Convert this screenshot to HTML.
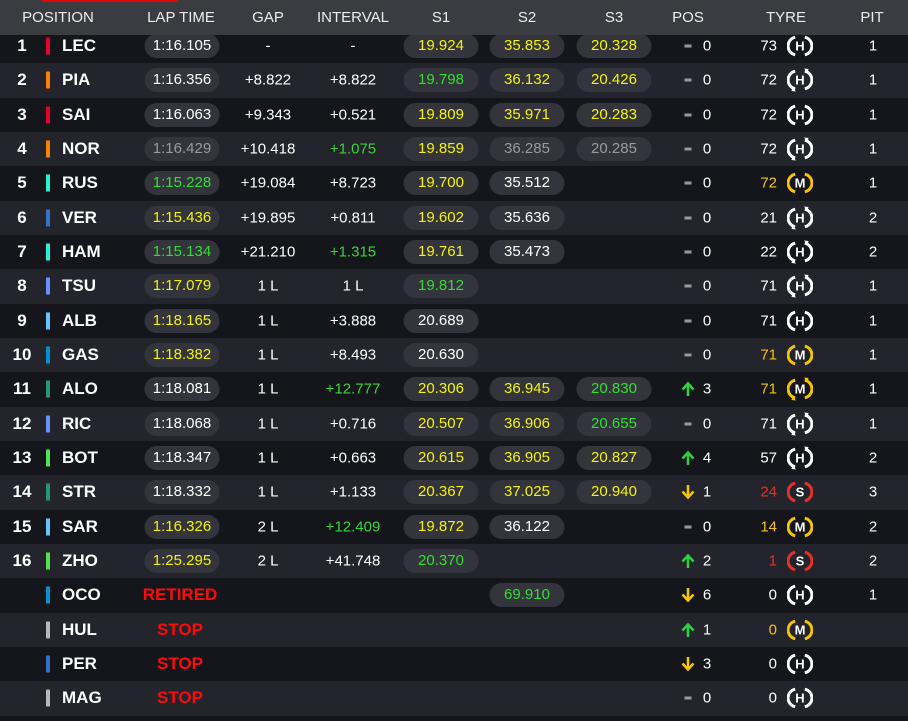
<!DOCTYPE html><html><head><meta charset="utf-8"><style>
*{margin:0;padding:0;box-sizing:border-box}
body{width:908px;height:721px;background:#15161c;font-family:"Liberation Sans",sans-serif;color:#fff;position:relative;overflow:hidden}
.hd{position:absolute;left:0;top:0;width:908px;height:35px;background:#3b3c41;z-index:2;font-size:15px;color:#ececec}
.hd span{position:absolute;top:9px;transform:translateX(-50%);white-space:nowrap}
.rb{position:absolute;left:41px;top:0;width:137px;height:2px;background:#e10600;z-index:3}
.r{position:absolute;left:0;width:908px;height:34.33px;font-size:15px}
.r.o{background:#23242c}
.r span{position:absolute;top:50%;transform:translate(-50%,-50%);white-space:nowrap}
.n{left:22px;font-weight:bold;font-size:17px}
.b{left:48px;width:4px;height:17px}
.c{left:62px;font-weight:bold;font-size:17px;transform:translate(0,-50%)!important}
.p{height:24px;width:75px;border-radius:12px;background:#34353c;text-align:center;line-height:24px}
.lt{left:182px}.s1{left:441px}.s2{left:527px}.s3{left:614px}
.g{left:268px}.iv{left:353px}
.ar{left:688px;font-weight:bold;width:14px;height:16px}.pn{left:707px}
.tn{left:777px;transform:translate(-100%,-50%)!important}
.ti{left:800px;width:26px;height:26px}
.pt{left:873px}
.Y{color:#f2f20a}.G{color:#33dd33}.W{color:#fff}.D{color:#9a9a9e}.IG{color:#39d439}
.TY{color:#f5c400}.TR{color:#e8302a}
.ret{left:180px;color:#ff0a0a;font-weight:bold;font-size:17px}
.stop{left:180px;color:#ff0a0a;font-weight:bold;font-size:17px}
.dash{left:688px;width:7px;height:3px;background:#9a9a9e}
</style></head><body>
<div class="hd"><span style="left:58px">POSITION</span><span style="left:181px">LAP TIME</span><span style="left:268px">GAP</span><span style="left:353px">INTERVAL</span><span style="left:441px">S1</span><span style="left:527px">S2</span><span style="left:614px">S3</span><span style="left:688px">POS</span><span style="left:786px">TYRE</span><span style="left:872px">PIT</span></div>
<div class="rb"></div>
<svg width="0" height="0" style="position:absolute"><defs>
<g id="arcs"><path d="M8.2 4.2A9 9 0 0 0 8.2 21.8M17.8 4.2A9 9 0 0 1 17.8 21.8" fill="none" stroke-width="3"/></g>
<g id="rot"><path d="M17 1.5l4.5 0.5-1 4.2zM9 24.5l-4.5-0.5 1-4.2z"/></g>
<g id="up"><path d="M7 15V3M1.5 8.5L7 2.5l5.5 6" fill="none" stroke-width="2.6"/></g>
<g id="dn"><path d="M7 1v12M1.5 7.5L7 13.5l5.5-6" fill="none" stroke-width="2.6"/></g>
</defs></svg>
<div style="position:absolute;left:0;top:29px">
<div class="r" style="top:0"><span class="n">1</span><span class="b" style="background:#e8002d"></span><span class="c">LEC</span><span class="p lt W">1:16.105</span><span class="g">-</span><span class="iv">-</span><span class="p s1 Y">19.924</span><span class="p s2 Y">35.853</span><span class="p s3 Y">20.328</span><span class="dash"></span><span class="pn">0</span><span class="tn">73</span><span class="ti"><svg width="26" height="26" stroke="#fff" fill="#fff"><use href="#arcs"/><text x="13" y="17.5" text-anchor="middle" font-size="13" font-weight="bold" stroke="none" font-family="Liberation Sans">H</text></svg></span><span class="pt">1</span></div>
<div class="r o" style="top:34.33px"><span class="n">2</span><span class="b" style="background:#ff8000"></span><span class="c">PIA</span><span class="p lt W">1:16.356</span><span class="g">+8.822</span><span class="iv">+8.822</span><span class="p s1 G">19.798</span><span class="p s2 Y">36.132</span><span class="p s3 Y">20.426</span><span class="dash"></span><span class="pn">0</span><span class="tn">72</span><span class="ti"><svg width="26" height="26" stroke="#fff" fill="#fff"><use href="#arcs"/><use href="#rot" stroke="none"/><text x="13" y="17.5" text-anchor="middle" font-size="13" font-weight="bold" stroke="none" font-family="Liberation Sans">H</text></svg></span><span class="pt">1</span></div>
<div class="r" style="top:68.66px"><span class="n">3</span><span class="b" style="background:#e8002d"></span><span class="c">SAI</span><span class="p lt W">1:16.063</span><span class="g">+9.343</span><span class="iv">+0.521</span><span class="p s1 Y">19.809</span><span class="p s2 Y">35.971</span><span class="p s3 Y">20.283</span><span class="dash"></span><span class="pn">0</span><span class="tn">72</span><span class="ti"><svg width="26" height="26" stroke="#fff" fill="#fff"><use href="#arcs"/><text x="13" y="17.5" text-anchor="middle" font-size="13" font-weight="bold" stroke="none" font-family="Liberation Sans">H</text></svg></span><span class="pt">1</span></div>
<div class="r o" style="top:103px"><span class="n">4</span><span class="b" style="background:#ff8000"></span><span class="c">NOR</span><span class="p lt D">1:16.429</span><span class="g">+10.418</span><span class="iv IG">+1.075</span><span class="p s1 Y">19.859</span><span class="p s2 D">36.285</span><span class="p s3 D">20.285</span><span class="dash"></span><span class="pn">0</span><span class="tn">72</span><span class="ti"><svg width="26" height="26" stroke="#fff" fill="#fff"><use href="#arcs"/><use href="#rot" stroke="none"/><text x="13" y="17.5" text-anchor="middle" font-size="13" font-weight="bold" stroke="none" font-family="Liberation Sans">H</text></svg></span><span class="pt">1</span></div>
<div class="r" style="top:137.3px"><span class="n">5</span><span class="b" style="background:#27f4d2"></span><span class="c">RUS</span><span class="p lt G">1:15.228</span><span class="g">+19.084</span><span class="iv">+8.723</span><span class="p s1 Y">19.700</span><span class="p s2 W">35.512</span><span class="dash"></span><span class="pn">0</span><span class="tn TY">72</span><span class="ti"><svg width="26" height="26" stroke="#f5c400" fill="#fff"><use href="#arcs"/><text x="13" y="17.5" text-anchor="middle" font-size="13" font-weight="bold" stroke="none" font-family="Liberation Sans">M</text></svg></span><span class="pt">1</span></div>
<div class="r o" style="top:171.6px"><span class="n">6</span><span class="b" style="background:#3671c6"></span><span class="c">VER</span><span class="p lt Y">1:15.436</span><span class="g">+19.895</span><span class="iv">+0.811</span><span class="p s1 Y">19.602</span><span class="p s2 W">35.636</span><span class="dash"></span><span class="pn">0</span><span class="tn">21</span><span class="ti"><svg width="26" height="26" stroke="#fff" fill="#fff"><use href="#arcs"/><use href="#rot" stroke="none"/><text x="13" y="17.5" text-anchor="middle" font-size="13" font-weight="bold" stroke="none" font-family="Liberation Sans">H</text></svg></span><span class="pt">2</span></div>
<div class="r" style="top:206px"><span class="n">7</span><span class="b" style="background:#27f4d2"></span><span class="c">HAM</span><span class="p lt G">1:15.134</span><span class="g">+21.210</span><span class="iv IG">+1.315</span><span class="p s1 Y">19.761</span><span class="p s2 W">35.473</span><span class="dash"></span><span class="pn">0</span><span class="tn">22</span><span class="ti"><svg width="26" height="26" stroke="#fff" fill="#fff"><use href="#arcs"/><use href="#rot" stroke="none"/><text x="13" y="17.5" text-anchor="middle" font-size="13" font-weight="bold" stroke="none" font-family="Liberation Sans">H</text></svg></span><span class="pt">2</span></div>
<div class="r o" style="top:240.3px"><span class="n">8</span><span class="b" style="background:#6692ff"></span><span class="c">TSU</span><span class="p lt Y">1:17.079</span><span class="g">1 L</span><span class="iv">1 L</span><span class="p s1 G">19.812</span><span class="dash"></span><span class="pn">0</span><span class="tn">71</span><span class="ti"><svg width="26" height="26" stroke="#fff" fill="#fff"><use href="#arcs"/><use href="#rot" stroke="none"/><text x="13" y="17.5" text-anchor="middle" font-size="13" font-weight="bold" stroke="none" font-family="Liberation Sans">H</text></svg></span><span class="pt">1</span></div>
<div class="r" style="top:274.6px"><span class="n">9</span><span class="b" style="background:#64c4ff"></span><span class="c">ALB</span><span class="p lt Y">1:18.165</span><span class="g">1 L</span><span class="iv">+3.888</span><span class="p s1 W">20.689</span><span class="dash"></span><span class="pn">0</span><span class="tn">71</span><span class="ti"><svg width="26" height="26" stroke="#fff" fill="#fff"><use href="#arcs"/><text x="13" y="17.5" text-anchor="middle" font-size="13" font-weight="bold" stroke="none" font-family="Liberation Sans">H</text></svg></span><span class="pt">1</span></div>
<div class="r o" style="top:309px"><span class="n">10</span><span class="b" style="background:#0093cc"></span><span class="c">GAS</span><span class="p lt Y">1:18.382</span><span class="g">1 L</span><span class="iv">+8.493</span><span class="p s1 W">20.630</span><span class="dash"></span><span class="pn">0</span><span class="tn TY">71</span><span class="ti"><svg width="26" height="26" stroke="#f5c400" fill="#fff"><use href="#arcs"/><text x="13" y="17.5" text-anchor="middle" font-size="13" font-weight="bold" stroke="none" font-family="Liberation Sans">M</text></svg></span><span class="pt">1</span></div>
<div class="r" style="top:343.3px"><span class="n">11</span><span class="b" style="background:#229971"></span><span class="c">ALO</span><span class="p lt W">1:18.081</span><span class="g">1 L</span><span class="iv IG">+12.777</span><span class="p s1 Y">20.306</span><span class="p s2 Y">36.945</span><span class="p s3 G">20.830</span><span class="ar"><svg width="14" height="16" stroke="#2fcf3f"><use href="#up"/></svg></span><span class="pn">3</span><span class="tn TY">71</span><span class="ti"><svg width="26" height="26" stroke="#f5c400" fill="#f5c400"><use href="#arcs"/><use href="#rot" stroke="none"/><text x="13" y="17.5" text-anchor="middle" font-size="13" font-weight="bold" stroke="none" fill="#fff" font-family="Liberation Sans">M</text></svg></span><span class="pt">1</span></div>
<div class="r o" style="top:377.6px"><span class="n">12</span><span class="b" style="background:#6692ff"></span><span class="c">RIC</span><span class="p lt W">1:18.068</span><span class="g">1 L</span><span class="iv">+0.716</span><span class="p s1 Y">20.507</span><span class="p s2 Y">36.906</span><span class="p s3 G">20.655</span><span class="dash"></span><span class="pn">0</span><span class="tn">71</span><span class="ti"><svg width="26" height="26" stroke="#fff" fill="#fff"><use href="#arcs"/><use href="#rot" stroke="none"/><text x="13" y="17.5" text-anchor="middle" font-size="13" font-weight="bold" stroke="none" font-family="Liberation Sans">H</text></svg></span><span class="pt">1</span></div>
<div class="r" style="top:412px"><span class="n">13</span><span class="b" style="background:#52e252"></span><span class="c">BOT</span><span class="p lt W">1:18.347</span><span class="g">1 L</span><span class="iv">+0.663</span><span class="p s1 Y">20.615</span><span class="p s2 Y">36.905</span><span class="p s3 Y">20.827</span><span class="ar"><svg width="14" height="16" stroke="#2fcf3f"><use href="#up"/></svg></span><span class="pn">4</span><span class="tn">57</span><span class="ti"><svg width="26" height="26" stroke="#fff" fill="#fff"><use href="#arcs"/><use href="#rot" stroke="none"/><text x="13" y="17.5" text-anchor="middle" font-size="13" font-weight="bold" stroke="none" font-family="Liberation Sans">H</text></svg></span><span class="pt">2</span></div>
<div class="r o" style="top:446.3px"><span class="n">14</span><span class="b" style="background:#229971"></span><span class="c">STR</span><span class="p lt W">1:18.332</span><span class="g">1 L</span><span class="iv">+1.133</span><span class="p s1 Y">20.367</span><span class="p s2 Y">37.025</span><span class="p s3 Y">20.940</span><span class="ar"><svg width="14" height="16" stroke="#f5c400"><use href="#dn"/></svg></span><span class="pn">1</span><span class="tn TR">24</span><span class="ti"><svg width="26" height="26" stroke="#e8302a" fill="#e8302a"><use href="#arcs"/><text x="13" y="17.5" text-anchor="middle" font-size="13" font-weight="bold" stroke="none" fill="#fff" font-family="Liberation Sans">S</text></svg></span><span class="pt">3</span></div>
<div class="r" style="top:480.6px"><span class="n">15</span><span class="b" style="background:#64c4ff"></span><span class="c">SAR</span><span class="p lt Y">1:16.326</span><span class="g">2 L</span><span class="iv IG">+12.409</span><span class="p s1 Y">19.872</span><span class="p s2 W">36.122</span><span class="dash"></span><span class="pn">0</span><span class="tn TY">14</span><span class="ti"><svg width="26" height="26" stroke="#f5c400" fill="#f5c400"><use href="#arcs"/><text x="13" y="17.5" text-anchor="middle" font-size="13" font-weight="bold" stroke="none" fill="#fff" font-family="Liberation Sans">M</text></svg></span><span class="pt">2</span></div>
<div class="r o" style="top:515px"><span class="n">16</span><span class="b" style="background:#52e252"></span><span class="c">ZHO</span><span class="p lt Y">1:25.295</span><span class="g">2 L</span><span class="iv">+41.748</span><span class="p s1 G">20.370</span><span class="ar"><svg width="14" height="16" stroke="#2fcf3f"><use href="#up"/></svg></span><span class="pn">2</span><span class="tn TR">1</span><span class="ti"><svg width="26" height="26" stroke="#e8302a" fill="#e8302a"><use href="#arcs"/><text x="13" y="17.5" text-anchor="middle" font-size="13" font-weight="bold" stroke="none" fill="#fff" font-family="Liberation Sans">S</text></svg></span><span class="pt">2</span></div>
<div class="r" style="top:549.3px"><span class="b" style="background:#0093cc"></span><span class="c">OCO</span><span class="ret">RETIRED</span><span class="p s2 G">69.910</span><span class="ar"><svg width="14" height="16" stroke="#f5c400"><use href="#dn"/></svg></span><span class="pn">6</span><span class="tn">0</span><span class="ti"><svg width="26" height="26" stroke="#fff" fill="#fff"><use href="#arcs"/><text x="13" y="17.5" text-anchor="middle" font-size="13" font-weight="bold" stroke="none" font-family="Liberation Sans">H</text></svg></span><span class="pt">1</span></div>
<div class="r o" style="top:583.6px"><span class="b" style="background:#b6babd"></span><span class="c">HUL</span><span class="stop">STOP</span><span class="ar"><svg width="14" height="16" stroke="#2fcf3f"><use href="#up"/></svg></span><span class="pn">1</span><span class="tn TY">0</span><span class="ti"><svg width="26" height="26" stroke="#f5c400" fill="#fff"><use href="#arcs"/><text x="13" y="17.5" text-anchor="middle" font-size="13" font-weight="bold" stroke="none" font-family="Liberation Sans">M</text></svg></span></div>
<div class="r" style="top:618px"><span class="b" style="background:#3671c6"></span><span class="c">PER</span><span class="stop">STOP</span><span class="ar"><svg width="14" height="16" stroke="#f5c400"><use href="#dn"/></svg></span><span class="pn">3</span><span class="tn">0</span><span class="ti"><svg width="26" height="26" stroke="#fff" fill="#fff"><use href="#arcs"/><text x="13" y="17.5" text-anchor="middle" font-size="13" font-weight="bold" stroke="none" font-family="Liberation Sans">H</text></svg></span></div>
<div class="r o" style="top:652.3px"><span class="b" style="background:#b6babd"></span><span class="c">MAG</span><span class="stop">STOP</span><span class="dash"></span><span class="pn">0</span><span class="tn">0</span><span class="ti"><svg width="26" height="26" stroke="#fff" fill="#fff"><use href="#arcs"/><text x="13" y="17.5" text-anchor="middle" font-size="13" font-weight="bold" stroke="none" font-family="Liberation Sans">H</text></svg></span></div>
</div>
</body></html>
